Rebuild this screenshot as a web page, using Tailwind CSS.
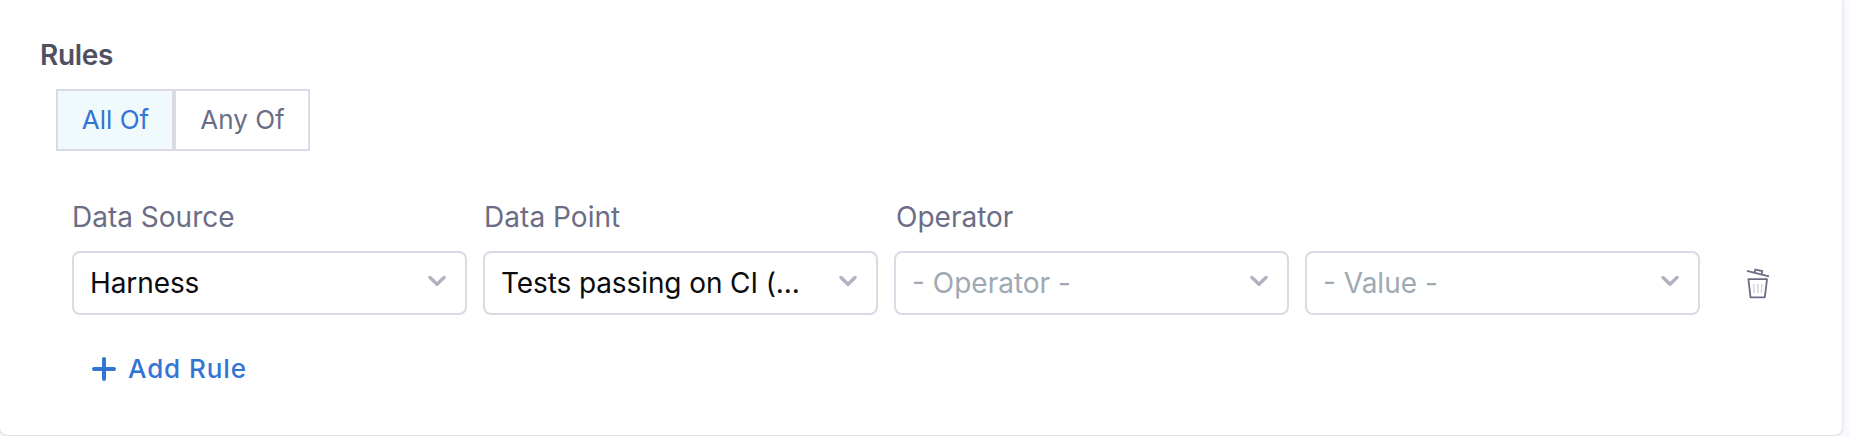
<!DOCTYPE html>
<html lang="en">
<head>
<meta charset="utf-8">
<title>Rules</title>
<script src="https://cdn.jsdelivr.net/npm/@tailwindcss/browser@4"></script>
</head>
<body class="h-[436px] overflow-hidden bg-[#f9faff] pr-2 font-['Inter',sans-serif]">
<main class="h-[435px] rounded-b-lg bg-white pt-[37px] shadow-[0_0_2px_rgba(40,41,61,0.08),0_1px_4px_rgba(96,97,112,0.2)]">
  <h2 class="pl-10 text-[28px] leading-9 font-semibold tracking-[-0.3px] text-[#4f5162]">Rules</h2>
  <div class="mt-4 ml-14 flex h-[62px] text-[26px]">
    <button class="w-[118px] border-2 border-[#d9dae5] bg-[#f0fafd] pb-0.5 pl-px text-[#3375d2]">All Of</button>
    <button class="w-[136px] border-2 border-[#d9dae5] bg-white pb-0.5 pl-px text-[#6b6d85]">Any Of</button>
  </div>
  <div class="mt-12 ml-[72px] flex items-end gap-4 text-[28px] leading-9">
    <label class="flex w-[395px] flex-col gap-4 text-[#6b6d85]"><span>Data Source</span>
      <span class="flex h-16 items-center justify-between rounded-lg border-2 border-[#d9dae5] pr-[19px] pl-4 text-[#0b0b0d]"><span class="tracking-[-0.1px]">Harness</span><svg class="mb-1 h-3 w-[18px]" viewBox="0 0 18 12" fill="none" stroke="#b0b1c1" stroke-width="3.4" stroke-linecap="round" stroke-linejoin="round"><path d="M2 2.5 9 9.3 16 2.5"/></svg></span>
    </label>
    <label class="flex w-[395px] flex-col gap-4 text-[#6b6d85]"><span class="pl-px tracking-[0.05px]">Data Point</span>
      <span class="flex h-16 items-center justify-between rounded-lg border-2 border-[#d9dae5] pr-[19px] pl-4 text-[#0b0b0d]"><span class="tracking-[-0.1px]">Tests passing on CI (...</span><svg class="mb-1 h-3 w-[18px]" viewBox="0 0 18 12" fill="none" stroke="#b0b1c1" stroke-width="3.4" stroke-linecap="round" stroke-linejoin="round"><path d="M2 2.5 9 9.3 16 2.5"/></svg></span>
    </label>
    <label class="flex w-[395px] flex-col gap-4 text-[#6b6d85]"><span class="pl-0.5">Operator</span>
      <span class="flex h-16 items-center justify-between rounded-lg border-2 border-[#d9dae5] pr-[19px] pl-4 text-[#9ea9b3]"><span>- Operator -</span><svg class="mb-1 h-3 w-[18px]" viewBox="0 0 18 12" fill="none" stroke="#b0b1c1" stroke-width="3.4" stroke-linecap="round" stroke-linejoin="round"><path d="M2 2.5 9 9.3 16 2.5"/></svg></span>
    </label>
    <div class="flex h-16 w-[395px] items-center justify-between rounded-lg border-2 border-[#d9dae5] pr-[19px] pl-4 text-[#9ea9b3]"><span>- Value -</span><svg class="mb-1 h-3 w-[18px]" viewBox="0 0 18 12" fill="none" stroke="#b0b1c1" stroke-width="3.4" stroke-linecap="round" stroke-linejoin="round"><path d="M2 2.5 9 9.3 16 2.5"/></svg></div>
    <button class="ml-7 flex h-16 items-center" aria-label="Delete rule">
      <svg class="h-8 w-7" viewBox="0 0 28 32" fill="none" stroke="#6b6d85" stroke-width="1.8"><path d="M3 3.8 25 9.4M10.5 5.4 11.4 2.5 18.2 4 17.8 7"/><path d="M4.4 12.2H23L20.8 30.3H6.5Z" stroke-linejoin="round"/><path d="m9.6 17 .7 9M13.8 17v9M18 17l-.7 9" stroke="#d3d4dd" stroke-width="1.5"/></svg>
    </button>
  </div>
  <button class="mt-9 ml-[92px] flex h-9 items-center gap-3 text-[26px] font-medium tracking-[0.9px] text-[#3375d2]">
    <svg class="size-6" viewBox="0 0 24 24" fill="none" stroke="currentColor" stroke-width="4" stroke-linecap="round"><path d="M12 2v20M2 12h20"/></svg>
    <span class="pb-0.5">Add Rule</span>
  </button>
</main>
</body>
</html>
